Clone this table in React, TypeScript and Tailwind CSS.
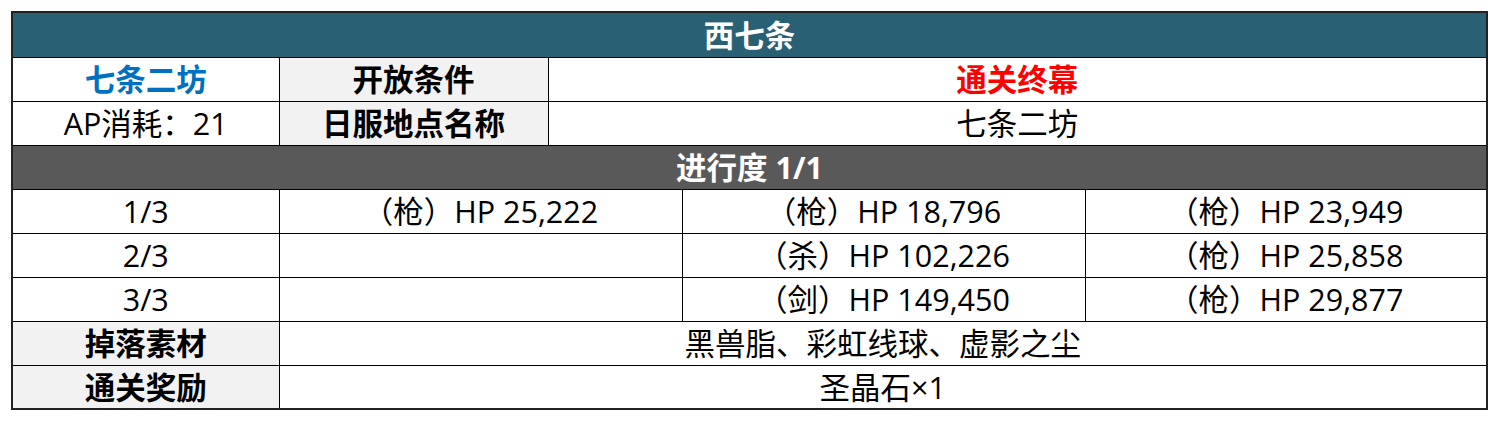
import React from "react";

const td = "border border-black text-center align-middle p-0 h-[44px]";

export default function App() {
  const enemies = [
    ["1/3", "（枪）HP 25,222", "（枪）HP 18,796", "（枪）HP 23,949"],
    ["2/3", "", "（杀）HP 102,226", "（枪）HP 25,858"],
    ["3/3", "", "（剑）HP 149,450", "（枪）HP 29,877"],
  ];
  return (
    <div
      className="w-[1500px] h-[422px] bg-white pt-[11px] pl-[11px]"
      style={{ fontFamily: '"Open Sans", "Noto Sans CJK SC", sans-serif' }}
    >
      <table className="table-fixed border-collapse w-[1477px] border-2 border-[#222] text-[30.5px] leading-none text-black">
        <colgroup>
          <col className="w-[267px]" />
          <col className="w-[269px]" />
          <col className="w-[134px]" />
          <col className="w-[403px]" />
          <col className="w-[402px]" />
        </colgroup>
        <tbody>
          <tr>
            <td colSpan={5} className={`${td} h-[45px] bg-[#2a6073] text-white font-bold`}>
              西七条
            </td>
          </tr>
          <tr>
            <td className={`${td} text-[#0070c0] font-bold`}>七条二坊</td>
            <td className={`${td} bg-[#f2f2f2] font-bold`}>开放条件</td>
            <td colSpan={3} className={`${td} text-[#ff0000] font-bold`}>
              通关终幕
            </td>
          </tr>
          <tr>
            <td className={td}>AP消耗：21</td>
            <td className={`${td} bg-[#f2f2f2] font-bold`}>日服地点名称</td>
            <td colSpan={3} className={td}>
              七条二坊
            </td>
          </tr>
          <tr>
            <td colSpan={5} className={`${td} bg-[#595959] text-white font-bold`}>
              进行度 1/1
            </td>
          </tr>
          {enemies.map((r) => (
            <tr key={r[0]}>
              <td className={td}>{r[0]}</td>
              <td colSpan={2} className={td}>
                {r[1]}
              </td>
              <td className={td}>{r[2]}</td>
              <td className={td}>{r[3]}</td>
            </tr>
          ))}
          <tr>
            <td className={`${td} bg-[#f2f2f2] font-bold`}>掉落素材</td>
            <td colSpan={4} className={td}>
              黑兽脂、彩虹线球、虚影之尘
            </td>
          </tr>
          <tr>
            <td className={`${td} bg-[#f2f2f2] font-bold`}>通关奖励</td>
            <td colSpan={4} className={td}>
              圣晶石×1
            </td>
          </tr>
        </tbody>
      </table>
    </div>
  );
}
